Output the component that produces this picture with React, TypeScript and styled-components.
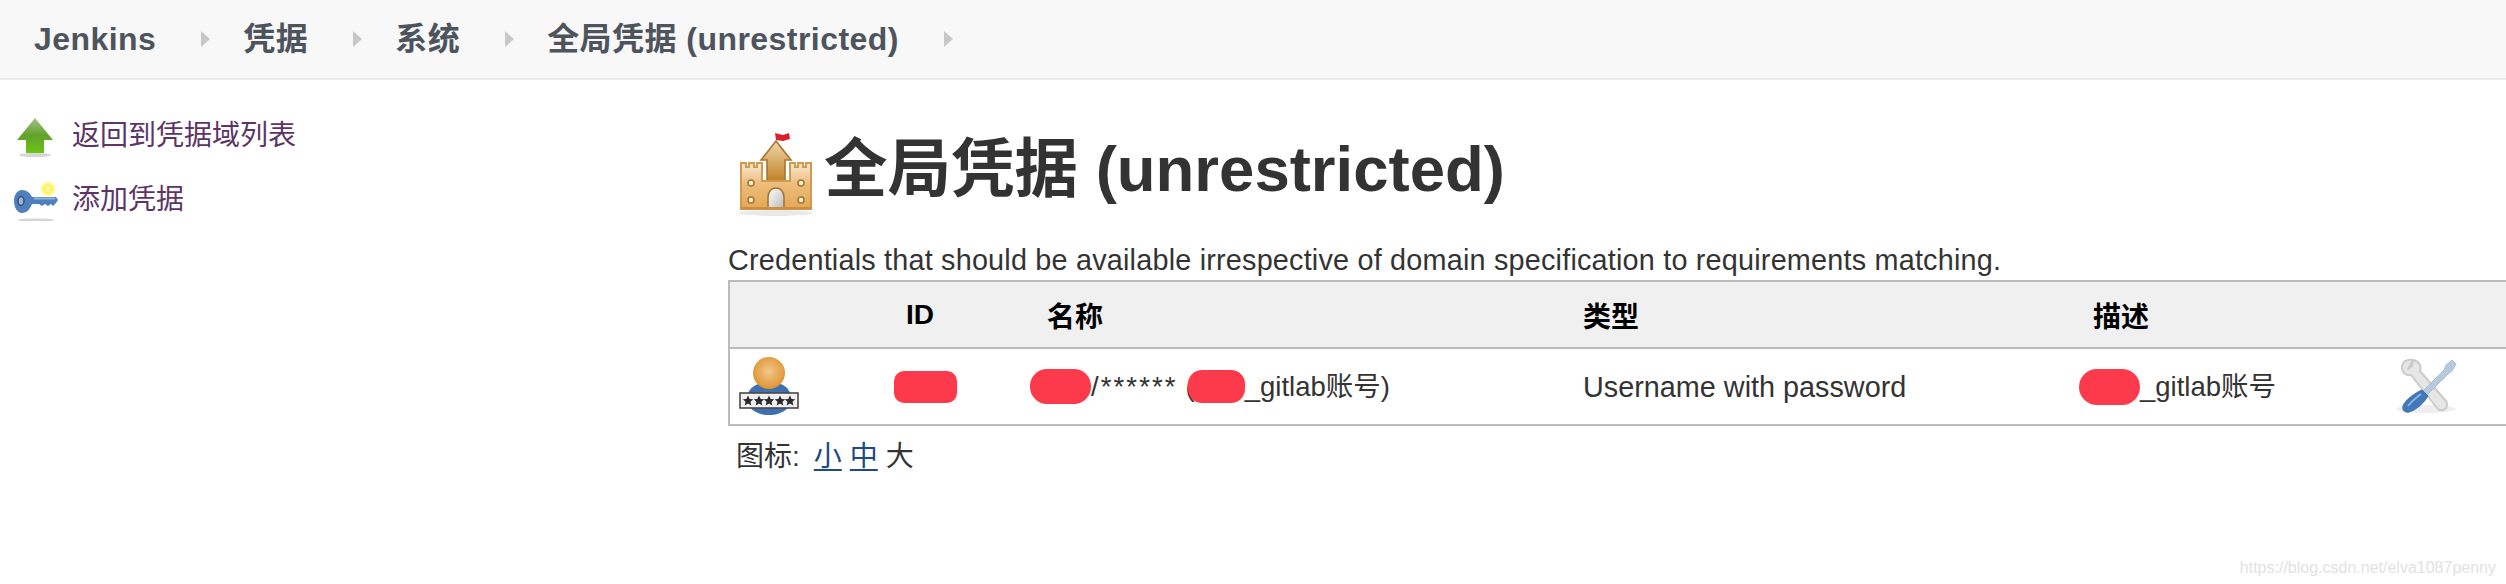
import React from "react";
import styled, { createGlobalStyle } from "styled-components";

const Global = createGlobalStyle`
  html, body { margin: 0; padding: 0; background: #fff; overflow: hidden; }
  body { font-family: "Liberation Sans", "Noto Sans CJK SC", sans-serif; color: #333; }
`;

const Page = styled.div`
  position: relative;
  width: 2506px;
  height: 584px;
  overflow: hidden;
`;

const Header = styled.header`
  display: flex;
  align-items: center;
  height: 78px;
  padding-left: 34px;
  background: #f8f8f8;
  border-bottom: 2px solid #e9ecef;
  font-size: 32px;
  font-weight: 700;
  color: #4d545d;
`;

const Crumb = styled.span`
  line-height: 40px;
  letter-spacing: 0.45px;
`;

const Chevron = styled.span`
  width: 0;
  height: 0;
  margin: 0 33px 0 45px;
  border-left: 9px solid #c8c8c8;
  border-top: 8px solid transparent;
  border-bottom: 8px solid transparent;
`;

const Body = styled.div`
  display: flex;
`;

const Side = styled.aside`
  flex: 0 0 728px;
  padding-top: 21px;
`;

const Task = styled.a`
  display: flex;
  align-items: center;
  height: 64px;
  color: #5c3566;
  font-size: 28px;
`;

const TaskIcon = styled.svg`
  flex: 0 0 48px;
  width: 48px;
  height: 48px;
  margin: 0 12px 0 12px;
  filter: blur(0.6px);
`;

const Main = styled.main`
  flex: 1;
  min-width: 0;
`;

const Title = styled.h1`
  display: flex;
  align-items: center;
  height: 92px;
  margin: 50px 0 0 7px;
  font-size: 63.5px;
  font-weight: 700;
  line-height: 76px;
  color: #333;
`;

const TitleIcon = styled.svg`
  flex: 0 0 80px;
  width: 80px;
  height: 90px;
  margin-right: 9px;
  filter: blur(0.6px);
`;

const TitleText = styled.span`
  position: relative;
  top: -7px;
`;

const Description = styled.p`
  margin: 20px 0 0;
  height: 38px;
  font-size: 28.8px;
  line-height: 36px;
  letter-spacing: 0.2px;
`;

const Table = styled.table`
  width: 1830px;
  table-layout: fixed;
  border-collapse: collapse;
  border-top: 2px solid #bbb;
  border-left: 2px solid #bbb;
  border-bottom: 2px solid #bbb;
`;

const HeadRow = styled.tr`
  height: 67px;
  background: #f0f0f0;
  border-bottom: 2px solid #bbb;
`;

const Row = styled.tr`
  height: 77px;
`;

const Th = styled.th<{ $pad?: number }>`
  padding: 0 0 0 ${(p) => p.$pad ?? 0}px;
  text-align: left;
  font-size: 28px;
  font-weight: 700;
  color: #000;
`;

const Td = styled.td`
  padding: 0;
  font-size: 28.8px;
  line-height: 36px;
  color: #333;
  white-space: nowrap;
`;

const CellInner = styled.div`
  display: flex;
  align-items: center;
  font-size: 27.5px;
`;

const Redaction = styled.span<{ $w: number; $h: number; $r: number; $ml?: number }>`
  flex: none;
  display: inline-block;
  width: ${(p) => p.$w}px;
  height: ${(p) => p.$h}px;
  margin-left: ${(p) => p.$ml ?? 0}px;
  border-radius: ${(p) => p.$r}px;
  background: #fc3a4b;
`;

const Stars = styled.span`
  letter-spacing: 2.1px;
`;

const Paren = styled.span`
  margin-left: 8px;
`;

const RowIcon = styled.svg`
  display: block;
  width: 70px;
  height: 60px;
  filter: blur(0.7px);
`;

const UserIcon = styled(RowIcon)`
  margin-left: 9px;
`;

const Sizes = styled.div`
  display: flex;
  align-items: center;
  height: 34px;
  margin: 11px 0 0 8px;
  font-size: 28px;
  gap: 8px;
`;

const SizesLabel = styled.span`
  margin-right: 6px;
`;

const SizeLink = styled.a`
  color: #204a87;
  text-decoration: underline;
  text-underline-offset: 3px;
`;

const Watermark = styled.div`
  position: absolute;
  right: 10px;
  bottom: 7px;
  font-size: 16px;
  color: #e2e2e2;
`;

const ArrowSvg = () => (
  <TaskIcon viewBox="0 0 48 48">
    <defs>
      <linearGradient id="arrowG" x1="0" y1="0" x2="0" y2="1">
        <stop offset="0" stopColor="#a3c088" />
        <stop offset="0.5" stopColor="#62a22a" />
        <stop offset="1" stopColor="#6bc416" />
      </linearGradient>
    </defs>
    <ellipse cx="23" cy="46" rx="16" ry="2" fill="#d6d6d6" />
    <path d="M23 9 L41 31 H32 V44 H14 V31 H5 Z" fill="url(#arrowG)" />
  </TaskIcon>
);

const KeySvg = () => (
  <TaskIcon viewBox="0 0 48 48">
    <defs>
      <radialGradient id="glow">
        <stop offset="0" stopColor="#fffbd0" />
        <stop offset="0.5" stopColor="#fbf25a" />
        <stop offset="1" stopColor="#fdf88a" stopOpacity="0.6" />
      </radialGradient>
    </defs>
    <ellipse cx="24" cy="47" rx="18" ry="1.6" fill="#d4d4d4" />
    <circle cx="36" cy="16" r="7.5" fill="url(#glow)" />
    <path d="M10 17 C15 17 18 20 20 24 H44 L46 27 L44 30 L41 33 L39 31 L36 33 L33 31 L30 33 L27 31 H20 C18 36 15 40 10 40 C5 40 2 34 2 28 C2 22 5 17 10 17 Z" fill="#4f7fbd" />
    <ellipse cx="9" cy="28" rx="3" ry="4.5" fill="#9fb4cc" stroke="#2e4f7e" strokeWidth="1.5" />
    <rect x="22" y="24.5" width="21" height="2" fill="#8fb4de" />
  </TaskIcon>
);

const CastleSvg = () => (
  <TitleIcon viewBox="0 0 80 90">
    <defs>
      <linearGradient id="castleA" x1="0" y1="0" x2="0" y2="1">
        <stop offset="0" stopColor="#f0d6ae" />
        <stop offset="1" stopColor="#c28324" />
      </linearGradient>
      <linearGradient id="castleB" x1="0" y1="0" x2="0" y2="1">
        <stop offset="0" stopColor="#f8e9d2" />
        <stop offset="0.45" stopColor="#ecbd7c" />
        <stop offset="1" stopColor="#e3a857" />
      </linearGradient>
      <linearGradient id="doorG" x1="0" y1="0" x2="1" y2="1">
        <stop offset="0" stopColor="#fff" />
        <stop offset="1" stopColor="#bbb" />
      </linearGradient>
    </defs>
    <ellipse cx="41" cy="82" rx="37" ry="3" fill="#e9e9e9" />
    <path d="M40 2 L48 4 L54 2 L55 8 L48 10 L41 9 Z" fill="#d8212e" />
    <path d="M41 10 L56 29 H50 V50 H32 V29 H26 Z" fill="url(#castleA)" stroke="#a8742e" strokeWidth="1.6" />
    <path
      d="M6 32 H11 V36 H14 V32 H19 V36 H22 V32 H27 V50 H55 V32 H60 V36 H63 V32 H68 V36 H71 V32 H76 V78 H6 Z"
      fill="url(#castleB)"
      stroke="#d29a4e"
      strokeWidth="2"
    />
    <circle cx="16" cy="52" r="3" fill="#fff3df" stroke="#a8742e" strokeWidth="1.6" />
    <circle cx="16" cy="69" r="3" fill="#fff3df" stroke="#a8742e" strokeWidth="1.6" />
    <circle cx="66" cy="52" r="3" fill="#fff3df" stroke="#a8742e" strokeWidth="1.6" />
    <circle cx="66" cy="69" r="3" fill="#fff3df" stroke="#a8742e" strokeWidth="1.6" />
    <path d="M33 77 V66 C33 60 37 57 41 57 C45 57 49 60 49 66 V77 Z" fill="url(#doorG)" stroke="#a8742e" strokeWidth="1.6" />
    <rect x="6" y="76" width="70" height="2.5" fill="#c98f3d" />
  </TitleIcon>
);

const UserSvg = () => (
  <UserIcon viewBox="0 0 70 60">
    <defs>
      <radialGradient id="headG" cx="0.5" cy="0.45" r="0.6">
        <stop offset="0" stopColor="#f0c88c" />
        <stop offset="1" stopColor="#df8f2a" />
      </radialGradient>
    </defs>
    <path d="M8 42 C8 30 20 25 30 25 C42 25 52 30 52 42 C52 52 42 58 30 58 C18 58 8 52 8 42 Z" fill="#3f70ad" />
    <circle cx="30" cy="16" r="16" fill="url(#headG)" />
    <rect x="1" y="36" width="58" height="15" fill="#f0f0f0" stroke="#4a4a4a" strokeWidth="1.6" />
    {[9, 20, 30, 41, 51].map((x) => (
      <path
        key={x}
        d={`M${x} 38.5 l1.6 3.4 3.6 .4 -2.7 2.5 .8 3.6 -3.3 -1.9 -3.3 1.9 .8 -3.6 -2.7 -2.5 3.6 -.4 Z`}
        fill="#2a2a2a"
      />
    ))}
  </UserIcon>
);

const ToolsSvg = () => (
  <RowIcon viewBox="0 0 70 60">
    <ellipse cx="32" cy="52" rx="30" ry="4" fill="#eee" />
    <path
      d="M19 3 C12 2 8 5 8 11 C8 16 13 19 17 18 L43 51 C45 54 50 54 52 51 C54 48 53 45 51 43 L26 14 C28 9 25 4 19 3 L18 9 L14 12 Z"
      fill="#e6e6e6"
      stroke="#cbcbcb"
      strokeWidth="2"
      strokeLinejoin="round"
    />
    <path d="M52 8 L58 3 L62 7 L58 14 L54 17 L30 41 L26 37 L50 13 Z" fill="#b7c9dc" stroke="#a9bdd2" strokeWidth="1" />
    <path d="M28 33 L34 39 C30 46 22 53 15 55 C11 56 8 53 9 49 C11 43 21 36 28 33 Z" fill="#4279bb" stroke="#3c6fae" strokeWidth="1" />
    <path d="M14 49 C18 44 23 40 27 37" stroke="#8cb2dd" strokeWidth="2" fill="none" />
  </RowIcon>
);

export default function App() {
  const crumbs = ["Jenkins", "凭据", "系统", "全局凭据 (unrestricted)"];
  return (
    <Page>
      <Global />
      <Header>
        {crumbs.map((c) => (
          <React.Fragment key={c}>
            <Crumb>{c}</Crumb>
            <Chevron />
          </React.Fragment>
        ))}
      </Header>
      <Body>
        <Side>
          <Task>
            <ArrowSvg />
            返回到凭据域列表
          </Task>
          <Task>
            <KeySvg />
            添加凭据
          </Task>
        </Side>
        <Main>
          <Title>
            <CastleSvg />
            <TitleText>全局凭据 (unrestricted)</TitleText>
          </Title>
          <Description>Credentials that should be available irrespective of domain specification to requirements matching.</Description>
          <Table>
            <colgroup>
              <col style={{ width: 165 }} />
              <col style={{ width: 153 }} />
              <col style={{ width: 536 }} />
              <col style={{ width: 510 }} />
              <col style={{ width: 301 }} />
              <col />
            </colgroup>
            <thead>
              <HeadRow>
                <Th />
                <Th $pad={12}>ID</Th>
                <Th>名称</Th>
                <Th>类型</Th>
                <Th>描述</Th>
                <Th />
              </HeadRow>
            </thead>
            <tbody>
              <Row>
                <Td>
                  <UserSvg />
                </Td>
                <Td>
                  <CellInner>
                    <Redaction $w={63} $h={32} $r={10} />
                  </CellInner>
                </Td>
                <Td>
                  <CellInner>
                    <Redaction $w={61} $h={35} $r={17} $ml={-17} />
                    <Stars>/******</Stars>
                    <Paren>(</Paren>
                    <Redaction $w={57} $h={33} $r={14} $ml={-7} />
                    <span>_gitlab账号)</span>
                  </CellInner>
                </Td>
                <Td>Username with password</Td>
                <Td>
                  <CellInner>
                    <Redaction $w={61} $h={36} $r={18} $ml={-14} />
                    <span>_gitlab账号</span>
                  </CellInner>
                </Td>
                <Td>
                  <ToolsSvg />
                </Td>
              </Row>
            </tbody>
          </Table>
          <Sizes>
            <SizesLabel>图标:</SizesLabel>
            <SizeLink>小</SizeLink>
            <SizeLink>中</SizeLink>
            <span>大</span>
          </Sizes>
        </Main>
      </Body>
      <Watermark>https://blog.csdn.net/elva1087penny</Watermark>
    </Page>
  );
}
